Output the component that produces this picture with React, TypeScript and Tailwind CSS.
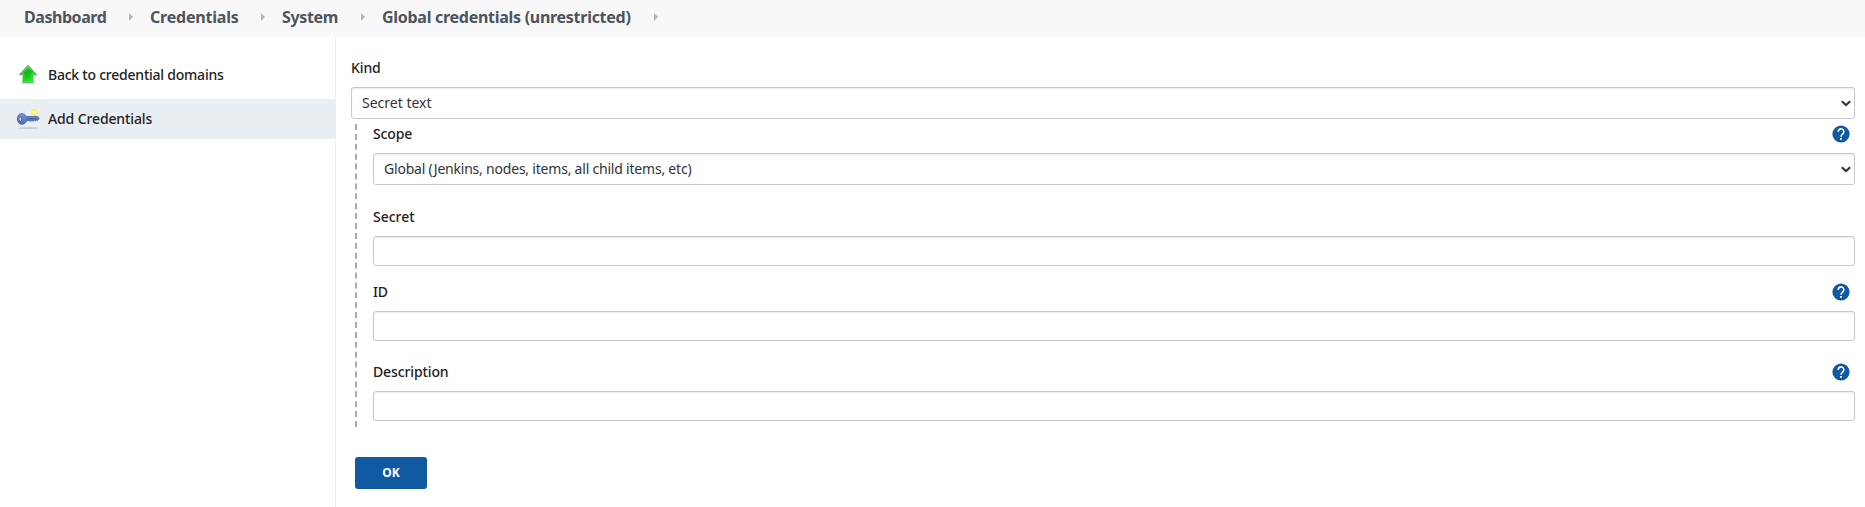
import type { ReactNode } from 'react';

const crumbs = [
  { label: 'Dashboard', width: 'w-[105px]', tracking: 'tracking-[-0.45px]' },
  { label: 'Credentials', width: 'w-[111px]', tracking: 'tracking-[-0.2px]' },
  { label: 'System', width: 'w-[79px]', tracking: 'tracking-[-0.35px]' },
  { label: 'Global credentials (unrestricted)', width: 'w-[272px]', tracking: 'tracking-[-0.28px]' },
];

function CrumbArrow() {
  return (
    <svg className="h-2 w-1 shrink-0" viewBox="0 0 4 8">
      <path d="M0 0L4 4L0 8Z" fill="#b5b5b5" />
    </svg>
  );
}

function UpArrowIcon() {
  return (
    <svg className="size-6 shrink-0" viewBox="0 0 24 24">
      <defs>
        <linearGradient id="green" x1="0" y1="0" x2="0.6" y2="1">
          <stop offset="0" stopColor="#7ad873" />
          <stop offset="0.5" stopColor="#17b41b" />
          <stop offset="1" stopColor="#0cf316" />
        </linearGradient>
      </defs>
      <ellipse cx="12" cy="19.8" rx="8" ry="1.3" fill="#000" opacity="0.15" />
      <path d="M12 2.4L20.6 11.5H17V19.3H7V11.5H3.4Z" fill="url(#green)" stroke="#3faa3d" strokeWidth="0.8" strokeLinejoin="round" />
      <path d="M8 18.4V10.6H5.6L12 3.8L18.4 10.6H16V18.4Z" fill="none" stroke="#8af282" strokeWidth="0.7" opacity="0.6" />
    </svg>
  );
}

function KeyIcon() {
  return (
    <svg className="size-6 shrink-0" viewBox="0 0 24 24">
      <defs>
        <linearGradient id="blue" x1="0" y1="0" x2="0" y2="1">
          <stop offset="0" stopColor="#7c99d6" />
          <stop offset="1" stopColor="#4b69b8" />
        </linearGradient>
      </defs>
      <ellipse cx="12" cy="21" rx="10" ry="1" fill="#000" opacity="0.14" />
      <path
        d="M5.8 6.6C8 6.6 9.4 7.8 10.2 9.5H21.6L23.2 11.3L21.6 13.4L20.4 12.9L19.4 14.1L18.2 13.1L17.2 14.3L16 13.2L14.8 14.3L13.6 13.7H10.6C10 15.9 8.2 17.3 5.8 17.3C3.2 17.3 1.4 15 1.4 12C1.4 8.9 3.2 6.6 5.8 6.6Z"
        fill="url(#blue)"
        stroke="#4560a6"
        strokeWidth="0.8"
      />
      <ellipse cx="4.3" cy="12.1" rx="1.5" ry="2.2" fill="#d6dff0" stroke="#34498a" strokeWidth="0.8" />
      <path d="M10.5 11.7H21" stroke="#344b8e" strokeWidth="0.8" />
      <circle cx="18.3" cy="5.4" r="3.5" fill="#f4f73a" opacity="0.75" />
      <circle cx="18.3" cy="5.4" r="1.5" fill="#fdfde0" />
    </svg>
  );
}

function HelpIcon() {
  return (
    <svg className="mr-[5px] size-[18px]" viewBox="0 0 18 18">
      <circle cx="9" cy="9" r="8.6" fill="#1059a0" />
      <path d="M6.2 6.9A2.8 2.8 0 1 1 11 8.7C9.8 9.8 9 10.1 9 11.7" fill="none" stroke="#fff" strokeWidth="1.6" />
      <rect x="8.1" y="13" width="1.8" height="1.8" fill="#fff" />
    </svg>
  );
}

function Select({ children }: { children: ReactNode }) {
  return (
    <div className="flex h-8 items-center justify-between rounded-[3px] border border-[#c8c8c8] bg-white pr-[3px] pl-[10px] text-sm leading-5 shadow-[inset_0_1px_1px_rgba(0,0,0,0.08)]">
      {children}
      <svg className="h-[7px] w-[10px]" viewBox="0 0 10 7">
        <path d="M0.8 1.2L5 5L9.2 1.2" fill="none" stroke="#333" strokeWidth="2.1" />
      </svg>
    </div>
  );
}

function Field({ label, help, children }: { label: ReactNode; help?: boolean; children?: ReactNode }) {
  return (
    <div className="flex flex-col gap-[9px]">
      <div className="flex h-5 items-center justify-between text-sm leading-5 font-medium text-[#222]">
        {label}
        {help && <HelpIcon />}
      </div>
      {children ?? (
        <input className="h-[30px] w-full rounded-[3px] border border-[#c8c8c8] bg-white px-2 shadow-[inset_0_1px_1px_rgba(0,0,0,0.08)] outline-none" />
      )}
    </div>
  );
}

export default function App() {
  return (
    <div className="flex h-[507px] flex-col overflow-hidden bg-white font-['Noto_Sans',sans-serif] text-[#333]">
      <header className="flex h-[37px] shrink-0 items-center bg-[#f8f8f8] pb-[3px] pl-6 text-[16px] leading-5 font-bold whitespace-nowrap text-[#4d545d]">
        {crumbs.map((c) => (
          <div key={c.label} className="flex items-center pr-[17px]">
            <span className={`${c.width} ${c.tracking}`}>{c.label}</span>
            <CrumbArrow />
          </div>
        ))}
      </header>
      <div className="flex flex-1">
        <nav className="flex w-[336px] shrink-0 flex-col gap-1 border-r border-[#eaeff2] pt-[18px] text-sm leading-5 font-medium text-[#222]">
          <a className="flex h-10 items-center gap-2 pl-4">
            <UpArrowIcon />
            <span className="tracking-[-0.23px]">Back to credential domains</span>
          </a>
          <a className="flex h-10 items-center gap-2 bg-[#e9eef2] pl-4">
            <KeyIcon />
            <span className="tracking-[-0.12px]">Add Credentials</span>
          </a>
        </nav>
        <main className="flex-1 pt-[21px] pr-[10px] pl-[15px]">
          <Field label={<span className="tracking-[-0.1px]">Kind</span>}>
            <Select>
              <span>Secret text</span>
            </Select>
          </Field>
          <section className="mt-[5px] ml-1 h-[303px] border-l-2 border-dashed border-[#aaa] pl-4">
            <Field help label={<span className="tracking-[-0.15px]">Scope</span>}>
              <Select>
                <span className="tracking-[-0.21px]">Global (Jenkins, nodes, items, all child items, etc)</span>
              </Select>
            </Field>
            <div className="mt-[22px]">
              <Field label={<span>Secret</span>} />
            </div>
            <div className="mt-4">
              <Field help label={<span className="tracking-[-0.3px]">ID</span>} />
            </div>
            <div className="mt-[21px]">
              <Field help label={<span className="tracking-[-0.12px]">Description</span>} />
            </div>
          </section>
          <button className="mt-[30px] ml-1 flex h-8 w-[72px] items-center justify-center rounded-[3px] bg-[#1059a0] text-xs font-bold text-white">
            OK
          </button>
        </main>
      </div>
    </div>
  );
}
